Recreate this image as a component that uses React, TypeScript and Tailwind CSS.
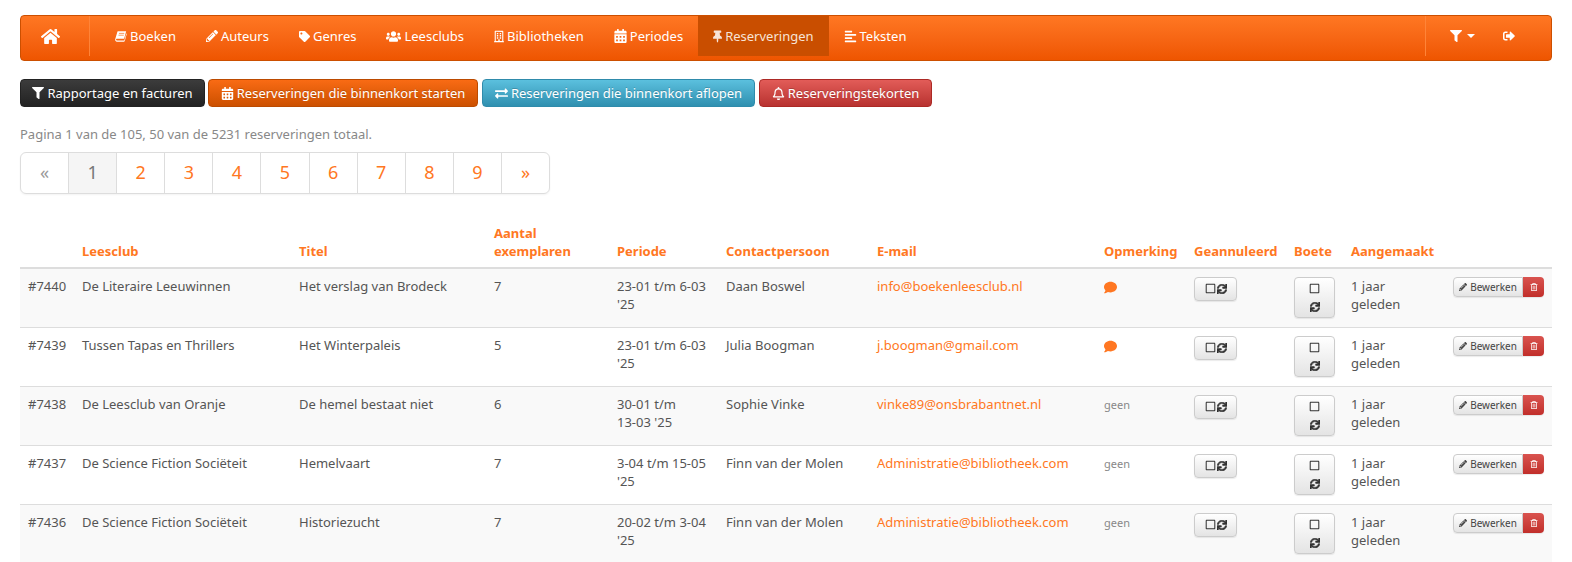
import {
  FaHome,
  FaPencilAlt,
  FaTag,
  FaUsers,
  FaRegBuilding,
  FaCalendarAlt,
  FaThumbtack,
  FaAlignLeft,
  FaFilter,
  FaSignOutAlt,
  FaExchangeAlt,
  FaRegBell,
  FaComment,
  FaSync,
  FaRegSquare,
  FaRegTrashAlt,
} from "react-icons/fa";

function BookIcon({ className }: { className?: string }) {
  return (
    <svg viewBox="0 0 14.500 13.500" className={className} fill="currentColor">
      <path d="M3.500.5H13.500L11 9.500H2.200C1.600 9.500 1.200 10 1.300 10.700 1.400 11.200 1.800 11.500 2.300 11.500H11.200L13.700 3 14.300 3.500 11.800 12.200C11.600 12.700 11.200 13 10.700 13H2.300C1 13 .2 12 .2 10.700 .2 10.200 .3 9.800 .5 9.200L2.800 1.200C2.900.8 3.100.5 3.500.5Z" />
      <path d="M4.800 3H11.200M4.200 5.200H10.600" stroke="#f86a14" strokeWidth=".8" fill="none" />
    </svg>
  );
}

const navItems = [
  { label: "Boeken", Icon: BookIcon, icon: "h-[13px] w-[12px]" },
  { label: "Auteurs", Icon: FaPencilAlt, icon: "h-[12px] w-[12px]" },
  { label: "Genres", Icon: FaTag, icon: "h-[11px] w-[11px]" },
  { label: "Leesclubs", Icon: FaUsers, icon: "h-[13px] w-[15px]" },
  { label: "Bibliotheken", Icon: FaRegBuilding, icon: "h-[13px] w-[10px]" },
  { label: "Periodes", Icon: FaCalendarAlt, icon: "h-[14px] w-[13px]" },
  { label: "Reserveringen", Icon: FaThumbtack, icon: "h-[13px] w-[9px]" },
  { label: "Teksten", Icon: FaAlignLeft, icon: "h-[13px] w-[13px]" },
];

const rows = [
  { id: "#7440", club: "De Literaire Leeuwinnen", title: "Het verslag van Brodeck", n: 7, period: "23-01 t/m 6-03 '25", name: "Daan Boswel", email: "info@boekenleesclub.nl", note: true },
  { id: "#7439", club: "Tussen Tapas en Thrillers", title: "Het Winterpaleis", n: 5, period: "23-01 t/m 6-03 '25", name: "Julia Boogman", email: "j.boogman@gmail.com", note: true },
  { id: "#7438", club: "De Leesclub van Oranje", title: "De hemel bestaat niet", n: 6, period: "30-01 t/m 13-03 '25", name: "Sophie Vinke", email: "vinke89@onsbrabantnet.nl", note: false },
  { id: "#7437", club: "De Science Fiction Sociëteit", title: "Hemelvaart", n: 7, period: "3-04 t/m 15-05 '25", name: "Finn van der Molen", email: "Administratie@bibliotheek.com", note: false },
  { id: "#7436", club: "De Science Fiction Sociëteit", title: "Historiezucht", n: 7, period: "20-02 t/m 3-04 '25", name: "Finn van der Molen", email: "Administratie@bibliotheek.com", note: false },
];

const pages = ["«", "1", "2", "3", "4", "5", "6", "7", "8", "9", "»"];
const headers = ["", "Leesclub", "Titel", "Aantal exemplaren", "Periode", "Contactpersoon", "E-mail", "Opmerking", "Geannuleerd", "Boete", "Aangemaakt", ""];

export default function App() {
  return (
    <div className="h-[562px] overflow-hidden bg-white px-5 pt-[15px] text-[13px] leading-[18.57px] text-[#555] font-['Noto_Sans',sans-serif]">
      {/* Navbar */}
      <nav className="flex h-[46px] rounded border border-[#cc4f00] bg-gradient-to-b from-[#ff7722] to-[#ee5500] text-white">
        <a className="flex h-10 w-[69px] items-center justify-center border-r border-[#ff8438] pr-[9px] text-[19px]">
          <FaHome />
        </a>
        <div className="flex pl-[10px]">
          {navItems.map(({ label, Icon, icon }) => (
            <a
              key={label}
              className={`flex h-10 items-center gap-[3px] px-[15px] ${label === "Reserveringen" ? "bg-[#c94e00] text-[#f7e3d6]" : ""}`}
            >
              <Icon className={icon} />
              {label}
            </a>
          ))}
        </div>
        <div className="ml-auto flex h-10 w-[126px] border-l border-[#ff8438]">
          <a className="flex w-[64px] items-center justify-center gap-[5px] pl-2">
            <FaFilter className="text-[12px]" />
            <span className="border-x-[4px] border-t-[4px] border-x-transparent border-t-white" />
          </a>
          <a className="flex flex-1 items-center justify-center pr-[24px]">
            <FaSignOutAlt className="text-[12px]" />
          </a>
        </div>
      </nav>

      {/* Report buttons */}
      <div className="mt-[18px] flex text-white [text-shadow:0_-1px_0_rgba(0,0,0,0.2)]">
        <a className="flex h-7 w-[185px] items-center justify-center gap-[3px] rounded-[4px] border border-[#222] bg-gradient-to-b from-[#3c3c3c] to-[#222]">
          <FaFilter className="text-[12px]" />
          Rapportage en facturen
        </a>
        <a className="ml-[3px] flex h-7 w-[270px] items-center justify-center gap-[3px] rounded-[4px] border border-[#bb4a00] bg-gradient-to-b from-[#f96b14] to-[#cc5000]">
          <FaCalendarAlt className="text-[13px]" />
          Reserveringen die binnenkort starten
        </a>
        <a className="ml-[4px] flex h-7 w-[273px] items-center justify-center gap-[3px] rounded-[4px] border border-[#2f8bab] bg-gradient-to-b from-[#5bc0de] to-[#2f90b0]">
          <FaExchangeAlt className="text-[13px]" />
          Reserveringen die binnenkort aflopen
        </a>
        <a className="ml-[4px] flex h-7 w-[173px] items-center justify-center gap-[3px] rounded-[4px] border border-[#ac2925] bg-gradient-to-b from-[#e25c58] to-[#b83230]">
          <FaRegBell className="text-[13px]" />
          Reserveringstekorten
        </a>
      </div>

      <p className="mt-[18px] text-[#888]">Pagina 1 van de 105, 50 van de 5231 reserveringen totaal.</p>

      {/* Pagination */}
      <div className="mt-[8px] flex h-[42px] w-[530px] rounded-md border border-[#ddd] text-[18px] shadow-[0_1px_2px_rgba(0,0,0,0.05)]">
        {pages.map((p, i) => (
          <a
            key={p}
            className={`flex flex-1 items-center justify-center ${i < 10 ? "border-r border-[#ddd]" : ""} ${
              i === 1 ? "bg-[#f5f5f5] text-[#777]" : i === 0 ? "text-[#999]" : "text-[#ff7722]"
            }`}
          >
            {p}
          </a>
        ))}
      </div>

      {/* Table */}
      <table className="mt-[22px] w-full table-fixed border-separate border-spacing-0">
        <colgroup>
          <col className="w-[54px]" />
          <col className="w-[217px]" />
          <col className="w-[195px]" />
          <col className="w-[123px]" />
          <col className="w-[109px]" />
          <col className="w-[151px]" />
          <col className="w-[227px]" />
          <col className="w-[90px]" />
          <col className="w-[100px]" />
          <col className="w-[57px]" />
          <col className="w-[102px]" />
          <col />
        </colgroup>
        <thead>
          <tr className="text-left align-bottom font-bold text-[#ff7722]">
            {headers.map((h, i) => (
              <th key={i} className="border-b-2 border-[#ddd] px-2 pt-2 pb-[6px]">
                {h}
              </th>
            ))}
          </tr>
        </thead>
        <tbody>
          {rows.map((r, i) => (
            <tr key={r.id} className={`h-[59px] align-top ${i % 2 === 0 ? "bg-[#f9f9f9]" : "bg-white"}`}>
              <td className="border-b border-[#ddd] p-2">{r.id}</td>
              <td className="border-b border-[#ddd] p-2">{r.club}</td>
              <td className="border-b border-[#ddd] p-2">{r.title}</td>
              <td className="border-b border-[#ddd] p-2">{r.n}</td>
              <td className="border-b border-[#ddd] p-2">
                {r.period.split(" ").map((part, j) => (
                  <span key={j}>
                    <span className="whitespace-nowrap">{part}</span>{" "}
                  </span>
                ))}
              </td>
              <td className="border-b border-[#ddd] p-2">{r.name}</td>
              <td className="border-b border-[#ddd] p-2 text-[#ff7722]">{r.email}</td>
              <td className="border-b border-[#ddd] p-2">
                {r.note ? (
                  <FaComment className="mt-1 text-[13px] text-[#ff7722]" />
                ) : (
                  <span className="text-[11px] text-[#888]">geen</span>
                )}
              </td>
              <td className="border-b border-[#ddd] p-2">
                <button className="flex h-6 w-[43px] items-center justify-center gap-px rounded-[4px] border border-[#ccc] bg-gradient-to-b from-white to-[#e4e4e4] text-[#333] shadow-[0_1px_1px_rgba(0,0,0,0.08)]">
                  <FaRegSquare className="text-[11px]" />
                  <FaSync className="stroke-[30px] text-[10px]" />
                </button>
              </td>
              <td className="border-b border-[#ddd] p-2">
                <button className="flex h-[41px] w-[41px] flex-col items-center justify-center gap-[8px] rounded-[4px] border border-[#ccc] bg-gradient-to-b from-white to-[#e4e4e4] text-[#333] shadow-[0_1px_1px_rgba(0,0,0,0.08)]">
                  <FaRegSquare className="text-[11px]" />
                  <FaSync className="stroke-[30px] text-[10px]" />
                </button>
              </td>
              <td className="border-b border-[#ddd] p-2">1 jaar geleden</td>
              <td className="border-b border-[#ddd] p-2">
                <div className="flex rounded-[4px] shadow-[0_1px_1px_rgba(0,0,0,0.08)]">
                  <button className="flex h-[20px] w-[70px] shrink-0 items-center justify-center gap-[3px] rounded-l-[4px] border border-[#ccc] bg-gradient-to-b from-white to-[#e4e4e4] text-[10px] leading-none text-[#444]">
                    <FaPencilAlt className="text-[8px]" />
                    Bewerken
                  </button>
                  <button className="flex h-[20px] w-[21px] shrink-0 items-center justify-center rounded-r-[4px] bg-gradient-to-b from-[#d9534f] to-[#c12e2a] text-white">
                    <FaRegTrashAlt className="text-[8px]" />
                  </button>
                </div>
              </td>
            </tr>
          ))}
        </tbody>
      </table>
    </div>
  );
}
